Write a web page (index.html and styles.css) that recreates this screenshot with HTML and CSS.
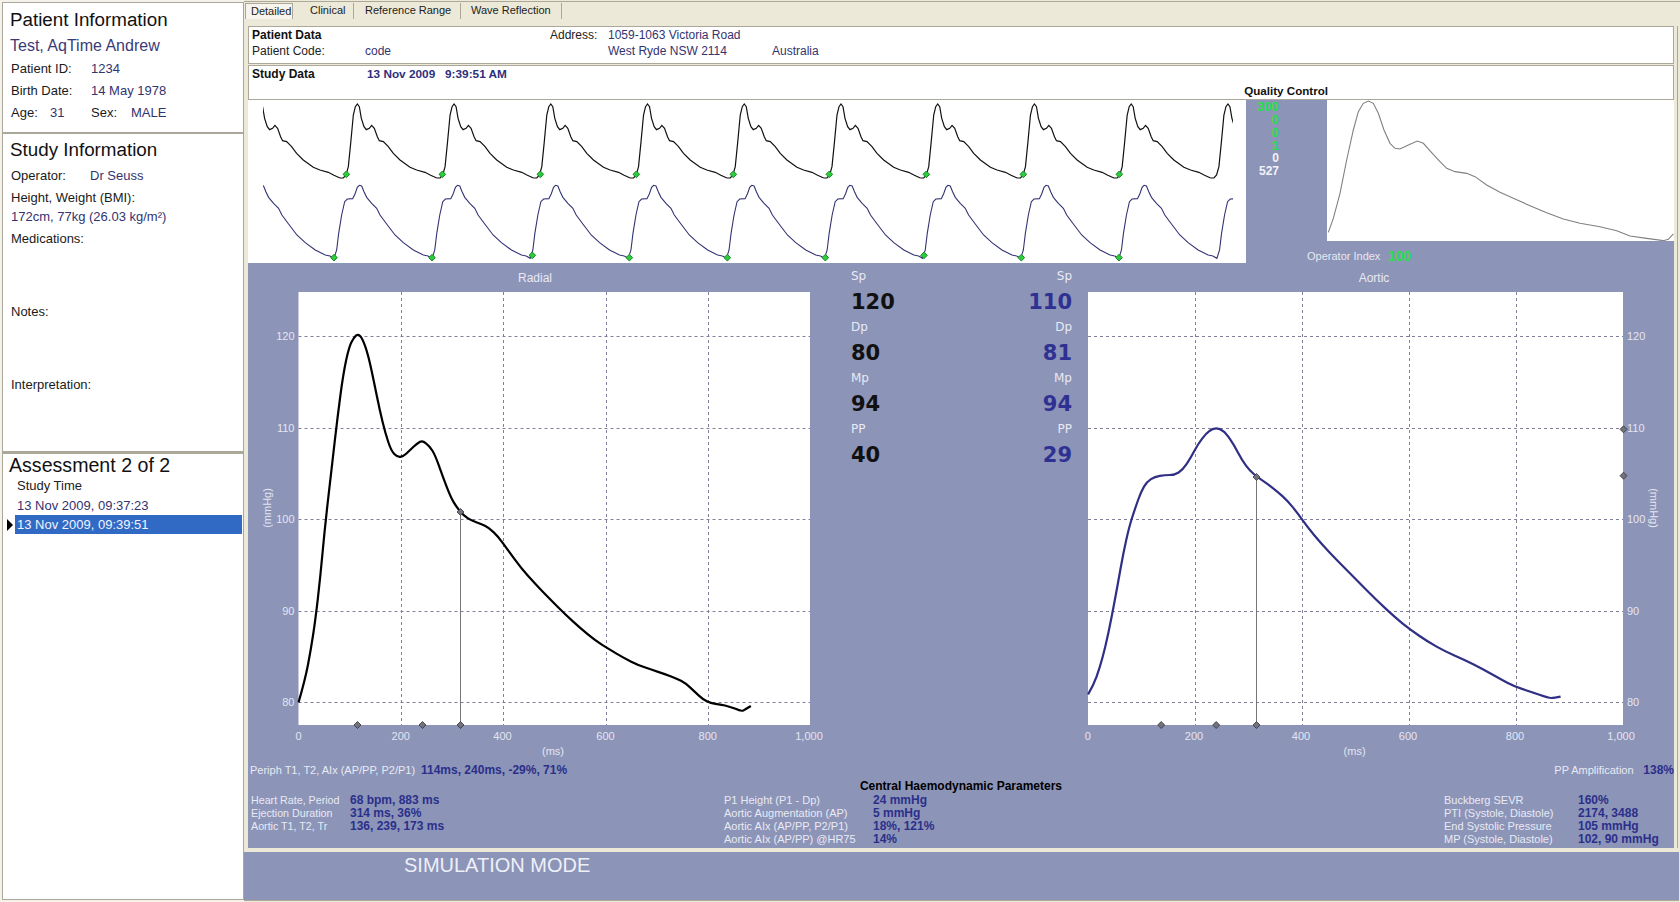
FILE: index.html
```html
<!DOCTYPE html>
<html lang="en">
<head>
<meta charset="utf-8">
<title>Pulse Wave Analysis</title>
<link rel="stylesheet" href="styles.css">
</head>
<body>
<div class="app">
  <aside class="side">
    <section class="panel panel-patient">
      <h2 class="title">Patient Information</h2>
      <div class="name">Test, AqTime Andrew</div>
      <div class="row"><span class="lbl w-id">Patient ID:</span><span class="val">1234</span></div>
      <div class="row"><span class="lbl w-id">Birth Date:</span><span class="val">14 May 1978</span></div>
      <div class="row"><span class="lbl w-age">Age:</span><span class="val w-age2">31</span><span class="lbl w-sex">Sex:</span><span class="val">MALE</span></div>
    </section>
    <section class="panel panel-study">
      <h2 class="title title-study">Study Information</h2>
      <div class="row"><span class="lbl w-op">Operator:</span><span class="val">Dr Seuss</span></div>
      <div class="row"><span class="lbl">Height, Weight (BMI):</span></div>
      <div class="row row-tight"><span class="val">172cm, 77kg (26.03 kg/m²)</span></div>
      <div class="row row-block"><span class="lbl">Medications:</span></div>
      <div class="row row-block"><span class="lbl">Notes:</span></div>
      <div class="row row-block"><span class="lbl">Interpretation:</span></div>
    </section>
    <section class="panel panel-assess">
      <h2 class="title title-assess">Assessment 2 of 2</h2>
      <div class="study-head">Study Time</div>
      <div class="study-item">13 Nov 2009, 09:37:23</div>
      <div class="study-sel"><span class="arrow"></span><span class="sel-box">13 Nov 2009, 09:39:51</span></div>
    </section>
  </aside>

  <main class="main">
    <nav class="tabs">
      <span class="tab tab-on">Detailed</span>
      <span class="tab tab-clin">Clinical</span>
      <span class="tab tab-ref">Reference Range</span>
      <span class="tab tab-wave">Wave Reflection</span>
    </nav>

    <div class="content">
      <section class="box box-patient">
        <b>Patient Data</b><span></span><span class="t-blk">Address:</span><span class="t-val">1059-1063 Victoria Road</span><span></span>
        <span class="t-blk">Patient Code:</span><span class="t-val">code</span><span></span><span class="t-val">West Ryde NSW 2114</span><span class="t-val">Australia</span>
      </section>
      <section class="box box-study">
        <b class="sd-title">Study Data</b>
        <b class="sd-date">13 Nov 2009&nbsp;&nbsp; 9:39:51 AM</b>
        <b class="qc-title">Quality Control</b>
      </section>

      <section class="wave-row">
        <svg class="waves" viewBox="248 100 998 163" width="998" height="163">
          <defs>
            <polyline id="beatR" class="w-r" points="-52,264 -42,264 -34,255 -27,230 -20,160 -12,75 -6,50 0,42 6,50 12,85 20,110 27,119 36,115 43,106 51,115 60,140 66,152 78,155 93,170 108,190 128,210 158,232 178,240 203,247 220,256 238.2,264"/>
            <polyline id="beatA" class="w-a" points="-92,498 -80,505 -72,480 -66,430 -57,375 -48,335 -40,327 -24,326 -17,312 -10,292 -4,286 3,288 10,305 18,322 33,340 48,355 58,375 78,402 103,435 128,458 158,480 188,495 202.3,498"/>
            <path id="dg" class="dia-g" d="M0 -10 L10 0 L0 10 L-10 0Z"/>
            <clipPath id="wclip"><rect x="263" y="100" width="970" height="163"/></clipPath>
          </defs>
          <g clip-path="url(#wclip)">
            <g transform="translate(240 90) scale(.33333)">
              <use href="#beatR" x="61.8"/><use href="#beatR" x="352"/><use href="#beatR" x="642.2"/><use href="#beatR" x="932.4"/><use href="#beatR" x="1222.6"/><use href="#beatR" x="1512.8"/><use href="#beatR" x="1803"/><use href="#beatR" x="2093.2"/><use href="#beatR" x="2383.4"/><use href="#beatR" x="2673.6"/><use href="#beatR" x="2963.8"/>
              <use href="#beatA" x="67.7"/><use href="#beatA" x="362"/><use href="#beatA" x="656.3"/><use href="#beatA" x="950.6"/><use href="#beatA" x="1244.9"/><use href="#beatA" x="1539.2"/><use href="#beatA" x="1833.5"/><use href="#beatA" x="2127.8"/><use href="#beatA" x="2422.1"/><use href="#beatA" x="2716.4"/><use href="#beatA" x="3010.7"/>
              <use href="#dg" x="319" y="253"/><use href="#dg" x="607" y="253"/><use href="#dg" x="901" y="253"/><use href="#dg" x="1189" y="253"/><use href="#dg" x="1480" y="253"/><use href="#dg" x="1768" y="253"/><use href="#dg" x="2059" y="253"/><use href="#dg" x="2350" y="253"/><use href="#dg" x="2638" y="253"/>
              <use href="#dg" x="282" y="503"/><use href="#dg" x="576" y="503"/><use href="#dg" x="877" y="496"/><use href="#dg" x="1168" y="503"/><use href="#dg" x="1462" y="503"/><use href="#dg" x="1756" y="503"/><use href="#dg" x="2052" y="496"/><use href="#dg" x="2344" y="503"/><use href="#dg" x="2637" y="503"/>
            </g>
          </g>
        </svg>
        <div class="qc-nums">
          <span class="g">300</span><span class="g">0</span><span class="g">0</span><span class="g">1</span><span>0</span><span>527</span>
        </div>
        <div class="qc-side">
          <svg class="avg" viewBox="1327 100 347 141" width="347" height="141">
            <g transform="translate(1180 70) scale(.33333)">
              <polyline class="w-avg" points="445,487 460,445 480,370 500,270 520,180 535,125 550,100 565,93 580,100 595,130 612,180 630,220 645,235 660,237 685,225 712,213 730,220 755,248 780,275 800,295 825,305 860,310 885,320 920,345 960,367 1000,385 1050,407 1100,428 1150,447 1200,460 1260,470 1310,482 1350,498 1400,505 1450,512 1465,508 1480,492"/>
            </g>
          </svg>
          <div class="op-index"><span class="op-lbl">Operator Index</span><b class="op-val">100</b></div>
        </div>
      </section>

      <section class="analysis">
        <div class="chart-row">
          <svg class="chart" viewBox="248 263 592 497" width="592" height="497">
            <defs>
              <path id="dm1" class="dia-m" d="M0 -3.5 L3.5 0 L0 3.5 L-3.5 0Z"/>
            </defs>
            <text class="ax-title" x="535" y="282">Radial</text>
            <rect class="plot" x="298.5" y="292" width="511.5" height="433"/>
            <g class="grid">
              <path d="M298.5 336.5H810M298.5 428.5H810M298.5 519.5H810M298.5 611.5H810M298.5 702.5H810"/>
              <path d="M401.5 292V725M503.5 292V725M606.5 292V725M708.5 292V725"/>
            </g>
            <g class="ax-y">
              <text x="294.5" y="340">120</text><text x="294.5" y="432">110</text><text x="294.5" y="523">100</text><text x="294.5" y="615">90</text><text x="294.5" y="706">80</text>
            </g>
            <g class="ax-x">
              <text x="298.5" y="740">0</text><text x="400.7" y="740">200</text><text x="502.5" y="740">400</text><text x="605.5" y="740">600</text><text x="707.7" y="740">800</text><text x="809" y="740">1,000</text>
              <text x="553" y="755">(ms)</text>
            </g>
            <text class="ax-rot" transform="translate(271 508) rotate(-90)">(mmHg)</text>
            <path class="marker-line" d="M460.5 512V725"/>
            <g transform="translate(240 260) scale(.38265 .33333)">
              <path class="c-r" d="M153,1327 Q170,1260 177.5,1215 Q185,1170 191,1125 Q197,1080 203.5,1015 Q210,950 216,875 Q222,800 231,710 Q240,620 247.5,545 Q255,470 262.5,405 Q270,340 277.5,300 Q285,260 291.5,246 Q298,232 303,227 Q308,222 314,228 Q320,235 327.5,260 Q335,285 342.5,325 Q350,365 357.5,407.5 Q365,450 372.5,485 Q380,520 387.5,546 Q395,572 402.5,581 Q410,590 417.5,590.5 Q425,591 435,580.5 Q445,570 453.5,560.5 Q462,551 469.5,546 Q477,541 486,550 Q495,558 502.5,571.5 Q510,585 520,617.5 Q530,650 540,680 Q550,710 557.5,725 Q565,740 575,753.5 Q585,767 595,774.5 Q605,782 617.5,787 Q630,792 640,797.5 Q650,803 662.5,816.5 Q675,830 687.5,850 Q700,870 717.5,897.5 Q735,925 752.5,947.5 Q770,970 790,993.5 Q810,1017 830,1040 Q850,1063 870,1084 Q890,1105 910,1124 Q930,1143 947.5,1155.5 Q965,1168 985,1181.5 Q1005,1195 1022.5,1205 Q1040,1215 1057.5,1222 Q1075,1229 1092.5,1235.5 Q1110,1242 1125,1248.5 Q1140,1255 1152.5,1262.5 Q1165,1270 1177.5,1283.5 Q1190,1297 1200,1307.5 Q1210,1318 1220,1324 Q1230,1330 1242.5,1331.5 Q1255,1333 1267.5,1336.5 Q1280,1340 1295,1346.5 Q1310,1355 1316,1351 Q1322,1347 1335,1338"/>
            </g>
            <use href="#dm1" x="460.5" y="512"/><use href="#dm1" x="357.5" y="725"/><use href="#dm1" x="422.5" y="725"/><use href="#dm1" x="460.5" y="725"/>
          </svg>

          <div class="stats">
            <div class="stat-col">
              <span class="s-l">Sp</span><b class="s-v">120</b>
              <span class="s-l">Dp</span><b class="s-v">80</b>
              <span class="s-l">Mp</span><b class="s-v">94</b>
              <span class="s-l">PP</span><b class="s-v">40</b>
            </div>
            <div class="stat-col stat-right">
              <span class="s-l">Sp</span><b class="s-v">110</b>
              <span class="s-l">Dp</span><b class="s-v">81</b>
              <span class="s-l">Mp</span><b class="s-v">94</b>
              <span class="s-l">PP</span><b class="s-v">29</b>
            </div>
          </div>

          <svg class="chart" viewBox="1080 263 594 497" width="594" height="497">
            <text class="ax-title" x="1374" y="282">Aortic</text>
            <rect class="plot" x="1088" y="292" width="535" height="433"/>
            <g class="grid">
              <path d="M1088 336.5H1623M1088 428.5H1623M1088 519.5H1623M1088 611.5H1623M1088 702.5H1623"/>
              <path d="M1195.5 292V725M1302.5 292V725M1409.5 292V725M1516.5 292V725"/>
            </g>
            <g class="ax-yr">
              <text x="1627" y="340">120</text><text x="1627" y="432">110</text><text x="1627" y="523">100</text><text x="1627" y="615">90</text><text x="1627" y="706">80</text>
            </g>
            <g class="ax-x">
              <text x="1087.7" y="740">0</text><text x="1194" y="740">200</text><text x="1301" y="740">400</text><text x="1408" y="740">600</text><text x="1515" y="740">800</text><text x="1621" y="740">1,000</text>
              <text x="1354.6" y="755">(ms)</text>
            </g>
            <text class="ax-rot" transform="translate(1650 508) rotate(90)">(mmHg)</text>
            <path class="marker-line" d="M1256.5 477V725"/>
            <g transform="translate(1060 260) scale(.39541 .33333)">
              <path class="c-a" d="M71,1303 Q85,1275 92.5,1250 Q100,1225 107.5,1192.5 Q115,1160 122.5,1117.5 Q130,1075 137.5,1027.5 Q145,980 152.5,930 Q160,880 167.5,840 Q175,800 182.5,772.5 Q190,745 197.5,720 Q205,695 212.5,680 Q220,665 230,657.5 Q240,650 252.5,647.5 Q265,645 277.5,645 Q290,645 300,637.5 Q310,630 320,612.5 Q330,595 340,572.5 Q350,550 360,535 Q370,520 377.5,513.5 Q385,505 395,505 Q405,505 412.5,513.5 Q420,520 430,537.5 Q440,555 450,577.5 Q460,600 470,616 Q480,632 490,642 Q500,652 512.5,662 Q525,672 537.5,683.5 Q550,695 562.5,708.5 Q575,722 587.5,740 Q600,758 612.5,779 Q625,800 642.5,825 Q660,850 680,875 Q700,900 725,930 Q750,960 775,990 Q800,1020 825,1047.5 Q850,1075 867.5,1091.5 Q885,1108 907.5,1126.5 Q930,1145 952.5,1160 Q975,1175 997.5,1186.5 Q1020,1198 1045,1213 Q1070,1228 1090,1241.5 Q1110,1255 1130,1267.5 Q1150,1280 1170,1287.5 Q1190,1295 1212.5,1304.5 Q1235,1314 1242.5,1314 Q1250,1314 1266,1310"/>
            </g>
            <defs><path id="dm2" class="dia-m" d="M0 -3.5 L3.5 0 L0 3.5 L-3.5 0Z"/></defs>
            <use href="#dm2" x="1256.5" y="477"/><use href="#dm2" x="1161.2" y="725"/><use href="#dm2" x="1216.2" y="725"/><use href="#dm2" x="1256.5" y="725"/><use href="#dm2" x="1623.5" y="429.3"/><use href="#dm2" x="1623.5" y="475.7"/>
          </svg>
        </div>

        <div class="amp-row">
          <div class="pair"><span class="p-l w-periph">Periph T1, T2, AIx (AP/PP, P2/P1)</span><b class="p-v">114ms, 240ms, -29%, 71%</b></div>
          <div class="pair"><span class="p-l w-amp">PP Amplification</span><b class="p-v">138%</b></div>
        </div>
        <h3 class="central">Central Haemodynamic Parameters</h3>
        <div class="params">
          <div class="pcol pcol-1">
            <span class="p-l">Heart Rate, Period</span><b class="p-v">68 bpm, 883 ms</b>
            <span class="p-l">Ejection Duration</span><b class="p-v">314 ms, 36%</b>
            <span class="p-l">Aortic T1, T2, Tr</span><b class="p-v">136, 239, 173 ms</b>
          </div>
          <div class="pcol pcol-2">
            <span class="p-l">P1 Height (P1 - Dp)</span><b class="p-v">24 mmHg</b>
            <span class="p-l">Aortic Augmentation (AP)</span><b class="p-v">5 mmHg</b>
            <span class="p-l">Aortic AIx (AP/PP, P2/P1)</span><b class="p-v">18%, 121%</b>
            <span class="p-l">Aortic AIx (AP/PP) @HR75</span><b class="p-v">14%</b>
          </div>
          <div class="pcol pcol-3">
            <span class="p-l">Buckberg SEVR</span><b class="p-v">160%</b>
            <span class="p-l">PTI (Systole, Diastole)</span><b class="p-v">2174, 3488</b>
            <span class="p-l">End Systolic Pressure</span><b class="p-v">105 mmHg</b>
            <span class="p-l">MP (Systole, Diastole)</span><b class="p-v">102, 90 mmHg</b>
          </div>
        </div>
      </section>
    </div>

    <footer class="status"><span class="sim">SIMULATION MODE</span></footer>
  </main>
</div>
</body>
</html>
```

FILE: styles.css
```css
* { box-sizing: border-box; }
html, body { margin: 0; padding: 0; }
body {
  width: 1680px;
  height: 902px;
  overflow: hidden;
  background: #ece9d8;
  font-family: "Liberation Sans", Arial, sans-serif;
  font-size: 12px;
  color: #111;
}
.app { display: flex; width: 1680px; height: 902px; }

/* sidebar */
.side { width: 244px; padding: 2px 0 0 2px; display: flex; flex-direction: column; background: #f4f2ea; flex: none; font-size: 13px; }
.panel { background: #fff; border: 1px solid #aca899; width: 242px; padding-left: 7px; }
.panel-patient { height: 131px; padding-top: 5px; }
.panel-study { height: 319px; padding-top: 4px; }
.panel-assess { height: 448px; padding-left: 6px; border-top-width: 2px; }
.title { margin: 0; font-weight: 400; font-size: 18.8px; line-height: 24px; color: #111; }
.title-study { margin-bottom: 2px; }
.title-assess { line-height: 22px; font-size: 19.6px; }
.name { font-size: 16px; line-height: 24px; color: #3b3b78; margin: 2px 0 -1px 0; }
.row { display: flex; height: 22px; align-items: center; margin-left: 1px; }
.row-tight { height: 19px; margin-top: -1px; margin-bottom: 1px; }
.row-block { margin-bottom: 51px; }
.lbl { color: #1a1a1a; }
.val { color: #33336f; }
.w-id { width: 80px; }
.w-age { width: 39px; }
.w-age2 { width: 41px; }
.w-sex { width: 40px; }
.w-op { width: 79px; }
.study-head { height: 20px; line-height: 20px; margin-left: 8px; color: #222; }
.study-item { height: 19px; line-height: 19px; margin-left: 8px; color: #33336f; }
.study-sel { display: flex; align-items: center; height: 19px; margin-left: -2px; }
.arrow { width: 0; height: 0; border-left: 6px solid #000; border-top: 6.5px solid transparent; border-bottom: 6.5px solid transparent; margin-right: 2px; }
.sel-box { flex: 1; height: 19px; line-height: 19px; background: #316ac5; color: #f2f4ff; padding-left: 2px; margin-right: 1px; }

/* main */
.main { flex: 1; display: flex; flex-direction: column; min-width: 0; }
.tabs { display: flex; height: 25px; padding: 1px 0 0 1px; font-size: 11px; border-top: 1px solid #aca899; background: #ece9d8; margin-top: 1px; }
.tab { height: 16px; line-height: 15px; color: #222; border-right: 1px solid #aca899; }
.tab-on { width: 48px; padding-left: 5px; background: #f6f4ec; border-top: 1px solid #aca899; border-left: 1px solid #aca899; line-height: 14px; }
.tab-clin { width: 61px; padding-left: 17px; }
.tab-ref { width: 107px; padding-left: 11px; }
.tab-wave { width: 101px; padding-left: 10px; }
.content { width: 1434px; padding: 0 3px 0 4px; border-right: 1px solid #aca899; display: flex; flex-direction: column; flex: none; }
.box { width: 1426px; background: #fff; border: 1px solid #aca899; font-size: 12px; line-height: 16px; }
.box-patient { height: 38px; display: grid; grid-template-columns: 113px 185px 58px 164px 1fr; grid-auto-rows: 16px; padding: 0 0 0 3px; align-content: start; }
.box-study { height: 35px; margin-top: 1px; display: flex; padding: 0 0 0 3px; }
.t-blk { color: #222; }
.t-val { color: #33336f; }
.sd-title { width: 115px; }
.sd-date { color: #2d2f7d; font-size: 11.8px; }
.qc-title { margin-left: auto; margin-right: 345px; align-self: flex-end; line-height: 14px; margin-bottom: 1px; font-size: 11.6px; }

.wave-row { display: flex; width: 1426px; height: 163px; flex: none; background: #8c94b8; }
.waves { display: block; background: #fff; flex: none; }
.w-r { fill: none; stroke: #111; stroke-width: 1.2; vector-effect: non-scaling-stroke; }
.w-a { fill: none; stroke: #333373; stroke-width: 1.1; vector-effect: non-scaling-stroke; }
.w-avg { fill: none; stroke: #808080; stroke-width: 1.1; vector-effect: non-scaling-stroke; }
.dia-g { fill: #2ccc3c; stroke: #1b8a2a; stroke-width: 1; vector-effect: non-scaling-stroke; }
.qc-nums { width: 81px; padding: 0 48px 0 0; display: flex; flex-direction: column; align-items: flex-end; font-weight: 700; font-size: 12px; line-height: 13px; color: #f2f3f8; }
.g { color: #26e04a; font-size: 13px; }
.qc-side { width: 347px; display: flex; flex-direction: column; }
.avg { display: block; background: #fff; flex: none; }
.op-index { display: flex; height: 22px; padding-top: 8px; line-height: 14px; margin-left: -20px; font-size: 11px; color: #e6e8f2; }
.op-lbl { width: 81px; }
.op-val { color: #26e04a; font-size: 14px; }

.analysis { width: 1426px; height: 585px; background: #8c94b8; display: flex; flex-direction: column; flex: none; }
.chart-row { display: flex; height: 497px; flex: none; }
.chart { display: block; flex: none; }
.plot { fill: #fff; }
.grid path { fill: none; stroke: #80809a; stroke-width: 1; stroke-dasharray: 3 3; }
.ax-title { font-size: 12px; fill: #e8eaf4; text-anchor: middle; }
.ax-y text { font-size: 11px; fill: #e4e6f0; text-anchor: end; }
.ax-yr text { font-size: 11px; fill: #e4e6f0; text-anchor: start; }
.ax-x text { font-size: 11px; fill: #e4e6f0; text-anchor: middle; }
.ax-rot { font-size: 11px; fill: #e4e6f0; text-anchor: middle; }
.marker-line { stroke: #777; stroke-width: 1; fill: none; }
.dia-m { fill: #71727e; stroke: #333; stroke-width: .8; }
.c-r { fill: none; stroke: #000; stroke-width: 2.2; stroke-linejoin: round; vector-effect: non-scaling-stroke; }
.c-a { fill: none; stroke: #2f2f85; stroke-width: 2.2; stroke-linejoin: round; vector-effect: non-scaling-stroke; }

.stats { width: 240px; flex: none; display: flex; justify-content: space-between; padding: 4px 8px 0 11px; font-family: "DejaVu Sans", Verdana, sans-serif; }
.stat-col { display: flex; flex-direction: column; align-items: flex-start; }
.stat-right { align-items: flex-end; color: #2f3192; }
.s-l { height: 20px; line-height: 18px; font-size: 12px; color: #e8eaf4; }
.s-v { height: 31px; line-height: 31px; font-size: 21px; font-weight: 700; }

.amp-row { display: flex; justify-content: space-between; height: 19px; align-items: center; padding: 1px 0 0 2px; font-size: 11px; }
.pair { display: flex; }
.w-periph { width: 171px; font-size: 10.6px; }
.w-amp { width: 89px; }
.p-l { color: #e8eaf4; font-size: 11px; line-height: 13px; white-space: nowrap; }
.p-v { color: #2b2f8a; font-size: 12px; line-height: 13px; white-space: nowrap; }
.central { margin: 0; text-align: center; font-size: 12px; line-height: 14px; height: 14px; font-weight: 700; color: #000; }
.params { display: flex; padding: 1px 0 0 3px; }
.pcol { display: grid; grid-auto-rows: 13px; }
.pcol-1 { width: 473px; grid-template-columns: 99px 1fr; }
.pcol-1 .p-l { font-size: 10.7px; }
.pcol-2 { width: 720px; grid-template-columns: 149px 1fr; }
.pcol-3 { width: 230px; grid-template-columns: 134px 1fr; }

.status { margin-top: 4px; height: 49px; width: 1435px; background: #8c94b8; border-bottom: 1px solid #aca899; display: flex; padding: 1px 0 0 160px; }
.sim { font-size: 20px; line-height: 24px; color: #eef0f8; }
```
